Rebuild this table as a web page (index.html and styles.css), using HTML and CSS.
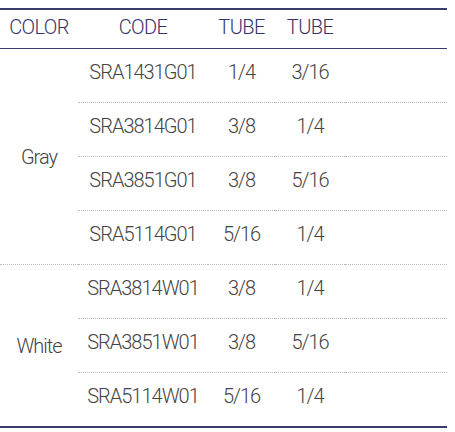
FILE: index.html
```html
<!DOCTYPE html>
<html>
<head>
<meta charset="utf-8">
<link rel="stylesheet" href="styles.css">
</head>
<body>
<table class="spec">
  <colgroup>
    <col class="c-color"><col class="c-code"><col class="c-t1"><col class="c-t2"><col class="c-rest">
  </colgroup>
  <thead>
    <tr><th>COLOR</th><th>CODE</th><th>TUBE</th><th>TUBE</th><th></th></tr>
  </thead>
  <tbody>
    <tr class="grp"><td class="color" rowspan="4">Gray</td><td>SRA1431G01</td><td>1/4</td><td>3/16</td><td></td></tr>
    <tr><td>SRA3814G01</td><td>3/8</td><td>1/4</td><td></td></tr>
    <tr><td>SRA3851G01</td><td>3/8</td><td>5/16</td><td></td></tr>
    <tr><td>SRA5114G01</td><td>5/16</td><td>1/4</td><td></td></tr>
    <tr class="grp"><td class="color" rowspan="3">White</td><td>SRA3814W01</td><td>3/8</td><td>1/4</td><td></td></tr>
    <tr><td>SRA3851W01</td><td>3/8</td><td>5/16</td><td></td></tr>
    <tr><td>SRA5114W01</td><td>5/16</td><td>1/4</td><td></td></tr>
  </tbody>
</table>
</body>
</html>
```
FILE: styles.css
```css
html, body {
  margin: 0;
  padding: 0;
  background: #fff;
}
body {
  padding-top: 8px;
  font-family: "Roboto", "Open Sans", sans-serif;
}
.spec {
  width: 447px;
  border-collapse: collapse;
  border-top: 2px solid #3b3b6e;
  border-bottom: 2px solid #3b3b6e;
  table-layout: fixed;
  font-size: 20px;
}
.c-color { width: 78px; }
.c-code { width: 130px; }
.c-t1 { width: 67px; }
.c-t2 { width: 70px; }
.c-rest { width: auto; }
.spec th {
  font-weight: 300;
  color: #34346a;
  height: 34px;
  padding: 0 0 4px;
  text-align: center;
  letter-spacing: -0.6px;
  border-bottom: 1px solid #3b3b6e;
}
.spec td {
  font-weight: 300;
  color: #444;
  height: 46px;
  padding: 0 0 7px;
  text-align: center;
  letter-spacing: -1px;
  border-top: 1px dotted #bbb;
}
.spec tbody tr:first-child td {
  border-top: none;
}
.spec td.color {
  padding: 0;
}
```
